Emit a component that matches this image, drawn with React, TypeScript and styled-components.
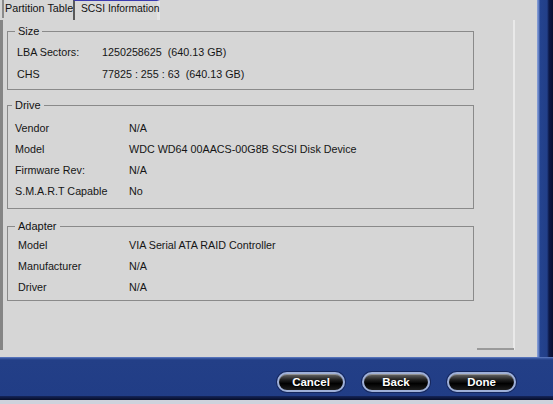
import React from "react";
import styled, { createGlobalStyle } from "styled-components";

const Global = createGlobalStyle`
  html, body { margin: 0; padding: 0; background: #d2d4d9; }
  body { font-family: "Liberation Sans", Arial, sans-serif; }
`;

const GRAY = "#d6d6d6";

const Frame = styled.div`
  width: 553px;
  height: 404px;
  display: flex;
  flex-direction: column;
  overflow: hidden;
  background: #d2d4d9;
`;

const Body = styled.div`
  height: 357px;
  display: flex;
  flex-direction: row;
`;

const Content = styled.div`
  flex: 1;
  background: ${GRAY};
  display: flex;
  flex-direction: column;
`;

const RightBorder = styled.div`
  width: 16px;
  background: linear-gradient(
    to right,
    #8da3d8 0px,
    #5a78bf 2px,
    #24438f 3px,
    #223f88 10px,
    #0c1846 12px,
    #080f30 16px
  );
`;

const TabsRow = styled.div`
  height: 20px;
  display: flex;
  align-items: flex-start;
`;

const Tab = styled.div<{ $active?: boolean }>`
  box-sizing: border-box;
  height: ${(p) => (p.$active ? "20px" : "18px")};
  margin-left: ${(p) => (p.$active ? "0" : "2px")};
  padding: ${(p) => (p.$active ? "1px 0 0 6px" : "2px 0 0 1px")};
  width: ${(p) => (p.$active ? "87px" : "71px")};
  font-size: ${(p) => (p.$active ? "10.3px" : "10.8px")};
  line-height: 13px;
  color: #111;
  white-space: nowrap;
  background: ${(p) => (p.$active ? "#d9d9d9" : GRAY)};
  border-left: ${(p) => (p.$active ? "2px solid #5a5a5a" : "2px solid #8a8a8a")};
  border-top: ${(p) => (p.$active ? "1px solid #3b3bb0" : "none")};
  border-right: ${(p) => (p.$active ? "3px solid #e3e3e3" : "none")};
`;

const Panel = styled.div`
  box-sizing: border-box;
  width: 515px;
  height: 330px;
  border-left: 3px solid #858585;
  border-right: 2px solid #e9e9e9;
  padding: 11px 0 0 4px;
  display: flex;
  flex-direction: column;
`;

const Group = styled.div<{ $h: number; $mt: number }>`
  box-sizing: border-box;
  width: 467px;
  height: ${(p) => p.$h}px;
  margin-top: ${(p) => p.$mt}px;
  border: 1px solid #8a8a8a;
  display: flex;
  flex-direction: column;
`;

const Legend = styled.div<{ $x: number }>`
  align-self: flex-start;
  margin: -7px 0 0 ${(p) => p.$x}px;
  padding: 0 3px;
  background: ${GRAY};
  font-size: 11px;
  line-height: 13px;
  color: #111;
`;

const Rows = styled.div<{ $pt: number }>`
  padding-top: ${(p) => p.$pt}px;
  display: flex;
  flex-direction: column;
`;

const Row = styled.div<{ $h: number; $pl: number; $lw: number }>`
  height: ${(p) => p.$h}px;
  padding-left: ${(p) => p.$pl}px;
  display: grid;
  grid-template-columns: ${(p) => p.$lw}px 1fr;
  align-items: center;
  font-size: 10.75px;
  color: #151515;
  white-space: pre;
`;

const Spacer = styled.div`
  flex: 1;
`;

const PanelFoot = styled.div`
  display: flex;
  justify-content: flex-end;
  margin-right: -1px;
`;

const Segment = styled.div`
  width: 37px;
  height: 2px;
  background: #9a9a9a;
`;

const Footer = styled.div`
  height: 39px;
  box-sizing: border-box;
  background: linear-gradient(
    to bottom,
    #6b86c8 0px,
    #3f5ea8 1px,
    #233f87 3px,
    #213d86 100%
  );
  display: flex;
  justify-content: flex-end;
  align-items: flex-start;
  padding: 15px 37px 0 0;
  gap: 17px;
`;

const FooterShadow = styled.div`
  height: 4px;
  background: linear-gradient(to bottom, #14255a, #070d28);
`;

const BottomEdge = styled.div`
  flex: 1;
  background: #ced2dc;
`;

const PillButton = styled.button<{ $w: number }>`
  box-sizing: border-box;
  width: ${(p) => p.$w}px;
  height: 20px;
  border-radius: 10px;
  border: 2px solid #9fb0d8;
  background: linear-gradient(to bottom, #6a6a6a 0%, #222 35%, #000 60%, #1e1e1e 100%);
  box-shadow: 0 0 0 1px #16285e, inset 0 1px 0 rgba(255, 255, 255, 0.3);
  color: #fff;
  font-family: "Liberation Sans", Arial, sans-serif;
  font-weight: bold;
  font-size: 11.5px;
  line-height: 14px;
  padding: 0;
  text-align: center;
  text-shadow: 0 1px 1px #000;
`;

type Item = [string, string];

const sizeRows: Item[] = [
  ["LBA Sectors:", "1250258625  (640.13 GB)"],
  ["CHS", "77825 : 255 : 63  (640.13 GB)"],
];

const driveRows: Item[] = [
  ["Vendor", "N/A"],
  ["Model", "WDC WD64 00AACS-00G8B SCSI Disk Device"],
  ["Firmware Rev:", "N/A"],
  ["S.M.A.R.T Capable", "No"],
];

const adapterRows: Item[] = [
  ["Model", "VIA Serial ATA RAID Controller"],
  ["Manufacturer", "N/A"],
  ["Driver", "N/A"],
];

function GroupBox(props: {
  title: string;
  legendX: number;
  h: number;
  mt: number;
  pt: number;
  rowH: number;
  pl: number;
  lw: number;
  items: Item[];
}) {
  return (
    <Group $h={props.h} $mt={props.mt}>
      <Legend $x={props.legendX}>{props.title}</Legend>
      <Rows $pt={props.pt}>
        {props.items.map(([k, v], i) => (
          <Row key={i} $h={props.rowH} $pl={props.pl} $lw={props.lw}>
            <span>{k}</span>
            <span>{v}</span>
          </Row>
        ))}
      </Rows>
    </Group>
  );
}

export default function App() {
  return (
    <>
      <Global />
      <Frame>
        <Body>
          <Content>
            <TabsRow>
              <Tab>Partition Table</Tab>
              <Tab $active>SCSI Information</Tab>
            </TabsRow>
            <Panel>
              <GroupBox
                title="Size"
                legendX={7}
                h={59}
                mt={0}
                pt={3}
                rowH={22}
                pl={9}
                lw={85}
                items={sizeRows}
              />
              <GroupBox
                title="Drive"
                legendX={4}
                h={104}
                mt={15}
                pt={5}
                rowH={21}
                pl={7}
                lw={114}
                items={driveRows}
              />
              <GroupBox
                title="Adapter"
                legendX={7}
                h={75}
                mt={17}
                pt={1}
                rowH={21}
                pl={10}
                lw={111}
                items={adapterRows}
              />
              <Spacer />
              <PanelFoot>
                <Segment />
              </PanelFoot>
            </Panel>
          </Content>
          <RightBorder />
        </Body>
        <Footer>
          <PillButton $w={68}>Cancel</PillButton>
          <PillButton $w={68}>Back</PillButton>
          <PillButton $w={69}>Done</PillButton>
        </Footer>
        <FooterShadow />
        <BottomEdge />
      </Frame>
    </>
  );
}
